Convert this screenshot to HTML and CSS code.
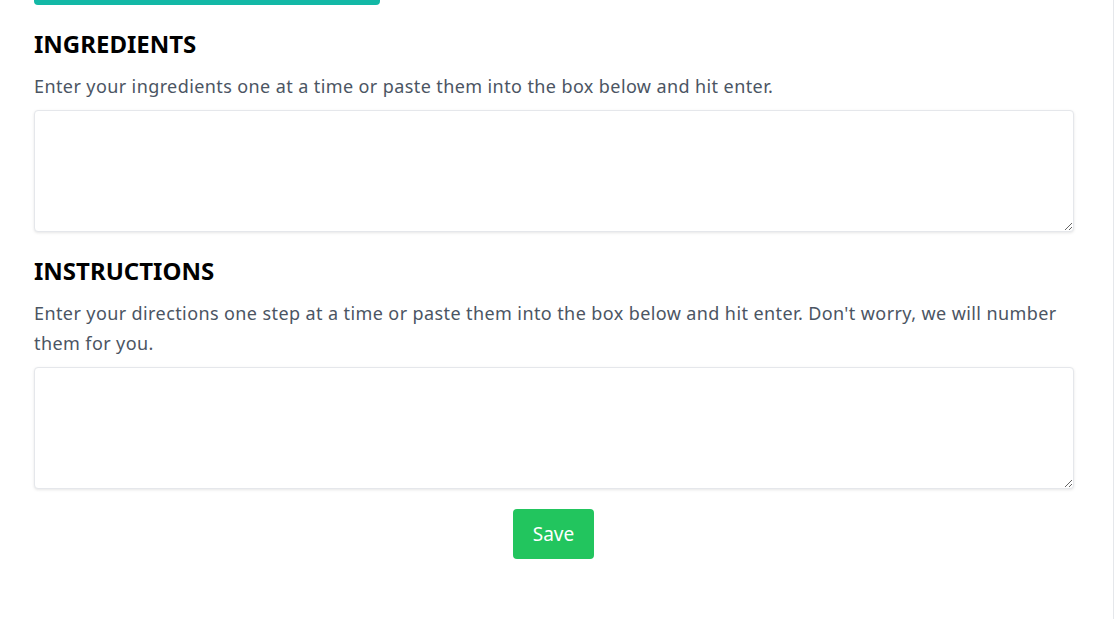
FILE: index.html
```html
<!DOCTYPE html>
<html lang="en">
<head>
<meta charset="utf-8">
<title>Recipe</title>
<link rel="stylesheet" href="styles.css">
</head>
<body>
<div class="page">
  <div class="content">
    <div class="tab-bar"></div>
    <section class="section">
      <h2 class="title">INGREDIENTS</h2>
      <p class="hint">Enter your ingredients one at a time or paste them into the box below and hit enter.</p>
      <textarea class="box"></textarea>
    </section>
    <section class="section section-next">
      <h2 class="title">INSTRUCTIONS</h2>
      <p class="hint">Enter your directions one step at a time or paste them into the box below and hit enter. Don't worry, we will number them for you.</p>
      <textarea class="box"></textarea>
    </section>
    <div class="actions">
      <button class="save" type="button">Save</button>
    </div>
  </div>
</div>
</body>
</html>
```
FILE: styles.css
```css
html, body {
  margin: 0;
  padding: 0;
  background: #ffffff;
}
.page {
  width: 1113px;
  min-height: 619px;
  border-right: 1px solid #e5e7eb;
  font-family: "Noto Sans", "Open Sans", sans-serif;
}
.content {
  padding-left: 34px;
  width: 1040px;
}
.tab-bar {
  width: 346px;
  height: 5px;
  background: #13b8a6;
  border-radius: 0 0 4px 4px;
}
.section {
  padding-top: 23px;
}
.section-next {
  padding-top: 23px;
}
.title {
  margin: 0;
  font-size: 24px;
  line-height: 32px;
  font-weight: 700;
  color: #000000;
}
.hint {
  margin: 11px 0 9px 0;
  font-size: 18px;
  line-height: 30px;
  letter-spacing: 0.4px;
  color: #4b5563;
}
.box {
  display: block;
  box-sizing: border-box;
  width: 1040px;
  height: 122px;
  margin: 0;
  border: 1px solid #e5e7eb;
  border-radius: 4px;
  box-shadow: 0 1px 3px rgba(0,0,0,0.1);
  background: #ffffff;
  font-family: inherit;
  font-size: 16px;
}
.actions {
  display: flex;
  justify-content: center;
  padding-top: 20px;
  padding-right: 1px;
}
.save {
  width: 81px;
  height: 50px;
  border: none;
  border-radius: 4px;
  background: #22c55e;
  color: #ffffff;
  font-family: inherit;
  font-size: 19px;
  padding: 0;
}
```
